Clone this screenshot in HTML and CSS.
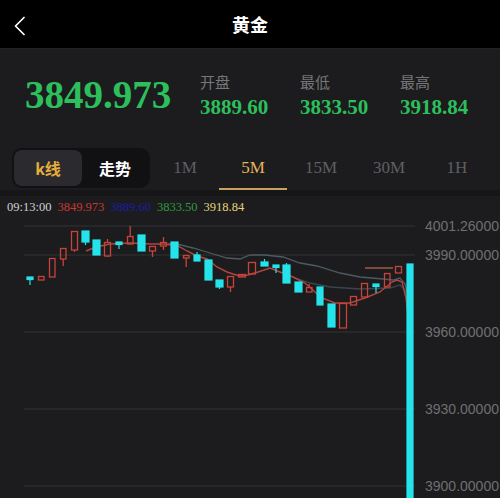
FILE: index.html
```html
<!DOCTYPE html>
<html lang="zh">
<head>
<meta charset="utf-8">
<title>黄金</title>
<link rel="stylesheet" href="styles.css">
</head>
<body>
<div class="page">
  <header class="topbar">
    <svg class="back" width="40" height="48" viewBox="0 0 40 48"><path d="M24 17.5 L15.5 26 L24 34.5" fill="none" stroke="#fff" stroke-width="1.7" stroke-linecap="round" stroke-linejoin="round"/></svg>
    <h1 class="title">黄金</h1>
  </header>

  <section class="quote">
    <div class="price">3849.973</div>
    <div class="stat"><div class="stat-label">开盘</div><div class="stat-value">3889.60</div></div>
    <div class="stat"><div class="stat-label">最低</div><div class="stat-value">3833.50</div></div>
    <div class="stat"><div class="stat-label">最高</div><div class="stat-value">3918.84</div></div>
  </section>

  <nav class="tabs">
    <div class="segment">
      <div class="seg-item seg-active">k线</div>
      <div class="seg-item">走势</div>
    </div>
    <div class="periods">
      <div class="period">1M</div>
      <div class="period period-active">5M</div>
      <div class="period">15M</div>
      <div class="period">30M</div>
      <div class="period">1H</div>
    </div>
  </nav>

  <div class="sep"></div>

  <div class="info">
    <span class="info-time">09:13:00</span>
    <span class="info-red">3849.973</span>
    <span class="info-blue">3889.60</span>
    <span class="info-green">3833.50</span>
    <span class="info-yellow">3918.84</span>
  </div>

  <svg class="chart" width="500" height="280" viewBox="0 218 500 280">
    <g class="grid" stroke="#2b2b2e" stroke-width="1.5">
      <line x1="24" y1="226" x2="415" y2="226"/>
      <line x1="24" y1="255" x2="415" y2="255"/>
      <line x1="24" y1="332" x2="415" y2="332"/>
      <line x1="24" y1="409" x2="415" y2="409"/>
      <line x1="24" y1="486" x2="415" y2="486"/>
    </g>
    <g class="axis" fill="#6f6f72" font-family="'Liberation Sans', Arial, sans-serif" font-size="14">
      <text x="425" y="231">4001.26000</text>
      <text x="425" y="260">3990.00000</text>
      <text x="425" y="337">3960.00000</text>
      <text x="425" y="414">3930.00000</text>
      <text x="425" y="491">3900.00000</text>
    </g>

    <!-- moving averages -->
    <polyline fill="none" stroke="#3b454b" stroke-width="1.3" points="290,276 310,283 330,287 360,289 390,288 400,285 405,290 410,312"/>
    <polyline fill="none" stroke="#4d5a61" stroke-width="1.3" points="168,244 177,244 193,248 210,253 227,258 240,259 250,255 265,255 283,257 300,263 317,266 340,273 360,277 383,279 393,280 400,278 405,284 410,305"/>
    <polyline fill="none" stroke="#b0463c" stroke-width="1.4" points="86,251 96,247 110,244 130,243 150,244 165,244 178,246 187,251 197,256 207,259 217,267 227,272 233,274 240,276 248,275 258,272 270,268 280,272 293,277 305,283 315,292 322,298 335,303 350,303 365,298 380,292 392,282 397,280 402,282 406,298 409,324"/>
    <line x1="365" y1="268" x2="393" y2="268" stroke="#9c5a45" stroke-width="1.5"/>

    <!-- candles: cyan filled -->
    <g fill="#25e3ea" stroke="#25e3ea" stroke-width="1.2">
      <rect x="27" y="277" width="6" height="2.5"/><line x1="30" y1="277" x2="30" y2="285"/>
      <rect x="82" y="231" width="7" height="11"/><line x1="85.5" y1="231" x2="85.5" y2="245"/>
      <rect x="93" y="240" width="7" height="15"/>
      <rect x="116" y="242" width="6" height="2.5"/><line x1="119" y1="242" x2="119" y2="249"/>
      <rect x="138" y="235" width="7" height="16"/>
      <rect x="171" y="242" width="7" height="16"/>
      <rect x="194" y="255" width="6" height="6"/><line x1="197" y1="252" x2="197" y2="255"/>
      <rect x="205" y="260" width="7" height="20"/>
      <rect x="216" y="280" width="7" height="7"/><line x1="219.5" y1="287" x2="219.5" y2="289"/>
      <rect x="261" y="262" width="7" height="4"/><line x1="264.5" y1="259" x2="264.5" y2="262"/>
      <rect x="273" y="265" width="6" height="2.5"/><line x1="276" y1="265" x2="276" y2="273"/>
      <rect x="283" y="265" width="7" height="18"/><line x1="286.5" y1="263" x2="286.5" y2="265"/>
      <rect x="295" y="282" width="7" height="10"/>
      <rect x="317" y="287" width="6" height="18"/>
      <rect x="328" y="304" width="7" height="23"/>
      <rect x="373" y="284" width="6" height="2.5"/><line x1="376" y1="284" x2="376" y2="293"/>
      <rect x="407" y="264" width="6" height="240"/>
    </g>

    <!-- candles: red hollow -->
    <g fill="none" stroke="#c8433a" stroke-width="1.3">
      <rect x="38.5" y="276.5" width="5.5" height="3.5"/>
      <rect x="49.5" y="258.5" width="5.5" height="18.5"/>
      <rect x="60.5" y="248.5" width="5.5" height="10.5"/><line x1="63.2" y1="259" x2="63.2" y2="266"/>
      <rect x="71.5" y="231.5" width="6" height="18.5"/><line x1="74.5" y1="250" x2="74.5" y2="252"/>
      <rect x="104.5" y="242.5" width="6" height="13.5"/><line x1="107.5" y1="239" x2="107.5" y2="242.5"/><line x1="107.5" y1="256" x2="107.5" y2="257"/>
      <rect x="127.5" y="236.5" width="5.5" height="7.5"/><line x1="130.2" y1="226" x2="130.2" y2="236.5"/>
      <rect x="149.5" y="246.5" width="6" height="4.5"/><line x1="152.5" y1="251" x2="152.5" y2="257"/>
      <rect x="160.5" y="242.5" width="6" height="3.5"/><line x1="163.5" y1="237" x2="163.5" y2="242.5"/><line x1="163.5" y1="246" x2="163.5" y2="250"/>
      <rect x="183.5" y="255.5" width="5.5" height="2.5"/><line x1="186.2" y1="258" x2="186.2" y2="267"/>
      <rect x="227.5" y="276.5" width="6" height="10.5"/><line x1="230.5" y1="287" x2="230.5" y2="292"/>
      <rect x="238.5" y="274.5" width="7" height="2.5"/>
      <rect x="248.5" y="262.5" width="7" height="11.5"/>
      <rect x="306.5" y="287.5" width="5.5" height="4.5"/><line x1="309.2" y1="284" x2="309.2" y2="287.5"/>
      <rect x="339.5" y="303.5" width="7" height="24.5"/>
      <rect x="350.5" y="296.5" width="6" height="8.5"/>
      <rect x="361.5" y="283.5" width="6" height="13.5"/>
      <rect x="384.5" y="273.5" width="5.5" height="13.5"/>
      <rect x="395.5" y="266.5" width="6" height="6.5"/>
    </g>
  </svg>
</div>
</body>
</html>
```

FILE: styles.css
```css
html, body {
  margin: 0;
  padding: 0;
  background: #1c1c1e;
}

.page {
  width: 500px;
  height: 498px;
  overflow: hidden;
  background: #1c1c1e;
}

.topbar {
  position: relative;
  height: 48px;
  background: #000;
  border-bottom: 1px solid #222;
  display: flex;
  align-items: center;
  justify-content: center;
}

.back {
  position: absolute;
  left: 0;
  top: 0;
}

.title {
  margin: 0;
  font-family: "Noto Sans CJK SC", sans-serif;
  font-size: 18px;
  font-weight: 700;
  color: #fff;
  line-height: 24px;
}

.quote {
  height: 91px;
  display: flex;
  align-items: flex-start;
  background: #1c1c1e;
}

.price {
  width: 175px;
  margin-top: 26px;
  padding-left: 25px;
  font-family: "Liberation Serif", "Times New Roman", serif;
  font-weight: 700;
  font-size: 39px;
  line-height: 39px;
  color: #2dbf5b;
}

.stat {
  width: 100px;
  margin-top: 23px;
}

.stat-label {
  font-family: "Noto Sans CJK SC", sans-serif;
  font-size: 15px;
  line-height: 20px;
  color: #77777a;
}

.stat-value {
  margin-top: 3px;
  font-family: "Liberation Serif", "Times New Roman", serif;
  font-weight: 700;
  font-size: 21px;
  line-height: 24px;
  color: #2dbf5b;
}

.tabs {
  height: 50px;
  display: flex;
  align-items: flex-start;
  background: #1c1c1e;
}

.segment {
  margin: 8px 0 0 12px;
  width: 138px;
  height: 40px;
  box-sizing: border-box;
  padding: 2px;
  border-radius: 10px;
  background: #111113;
  display: flex;
}

.seg-item {
  flex: 1;
  display: flex;
  align-items: center;
  justify-content: center;
  font-family: "Noto Sans CJK SC", sans-serif;
  font-size: 16px;
  font-weight: 700;
  color: #fff;
}

.seg-active {
  flex: 0 0 68px;
  border-radius: 8px;
  background: #2b2b2f;
  color: #e5ad3c;
}

.periods {
  margin-left: 1px;
  display: flex;
}

.period {
  width: 68px;
  height: 41px;
  padding-top: 7px;
  display: flex;
  align-items: center;
  justify-content: center;
  border-bottom: 2px solid transparent;
  font-family: "Liberation Serif", "Times New Roman", serif;
  font-size: 17px;
  color: #5f5f63;
}

.period-active {
  color: #e6b45a;
  border-bottom-color: #c9a35e;
}

.sep {
  height: 6px;
  background: #161618;
}

.info {
  height: 22px;
  padding-left: 7px;
  display: flex;
  align-items: center;
  font-family: "Liberation Serif", "Times New Roman", serif;
  font-size: 12.5px;
  line-height: 22px;
}

.info span {
  margin-right: 6px;
}

.info-time { color: #d0d0d0; }
.info-red { color: #cc3530; }
.info-blue { color: #1b1ba8; }
.info-green { color: #2f9a3e; }
.info-yellow { color: #e3d47a; }

.chart {
  display: block;
}
```
